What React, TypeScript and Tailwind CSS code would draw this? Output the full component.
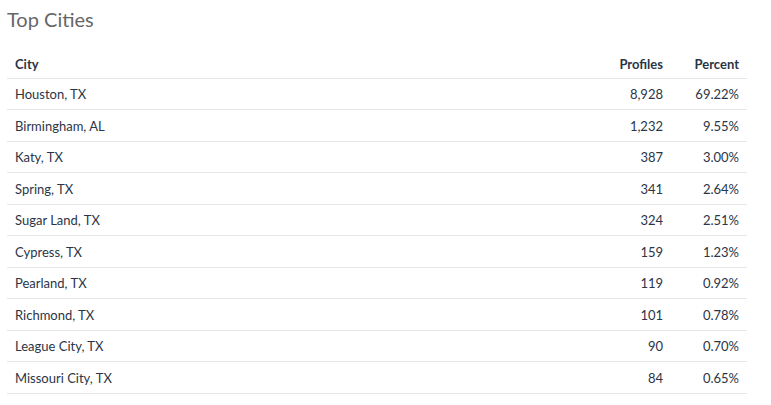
import React from "react";

const rows: [string, string, string][] = [
  ["Houston, TX", "8,928", "69.22%"],
  ["Birmingham, AL", "1,232", "9.55%"],
  ["Katy, TX", "387", "3.00%"],
  ["Spring, TX", "341", "2.64%"],
  ["Sugar Land, TX", "324", "2.51%"],
  ["Cypress, TX", "159", "1.23%"],
  ["Pearland, TX", "119", "0.92%"],
  ["Richmond, TX", "101", "0.78%"],
  ["League City, TX", "90", "0.70%"],
  ["Missouri City, TX", "84", "0.65%"],
];

export default function App() {
  return (
    <div className="bg-white w-[771px] h-[405px] pl-[7px] pt-[5px] text-[#2b3546]" style={{ fontFamily: "Lato, 'Noto Sans', sans-serif" }}>
      <h2 className="text-[20px] leading-[28px] text-[#666666] font-normal">Top Cities</h2>
      <table className="w-[740px] mt-[13px] border-collapse text-[13px]">
        <thead>
          <tr className="h-[32px] border-b border-[#e6e6e6]">
            <th className="text-left font-bold px-2 pt-[5px]">City</th>
            <th className="text-right font-bold px-2 w-[100px] pt-[5px]">Profiles</th>
            <th className="text-right font-bold pl-2 pr-2 w-[76px] pt-[5px]">Percent</th>
          </tr>
        </thead>
        <tbody>
          {rows.map((r) => (
            <tr key={r[0]} className="h-[31.5px] border-b border-[#e6e6e6]">
              <td className="text-left px-2 pt-[2px]">{r[0]}</td>
              <td className="text-right px-2 pt-[2px]">{r[1]}</td>
              <td className="text-right px-2 pt-[2px]">{r[2]}</td>
            </tr>
          ))}
        </tbody>
      </table>
    </div>
  );
}
